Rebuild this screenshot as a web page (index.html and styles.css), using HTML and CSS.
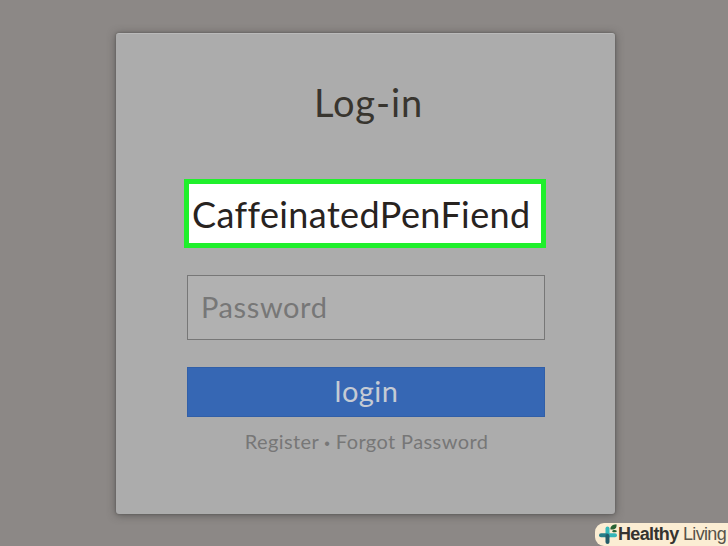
FILE: index.html
```html
<!DOCTYPE html>
<html lang="en">
<head>
<meta charset="utf-8">
<title>Log-in</title>
<link rel="stylesheet" href="styles.css">
</head>
<body>
<main class="card">
  <h1 class="title"><span>Log-in</span></h1>
  <div class="username"><span>CaffeinatedPenFiend</span></div>
  <div class="password"><span>Password</span></div>
  <button class="submit" type="button"><span>login</span></button>
  <p class="links"><span>Register <i class="dot">•</i> Forgot Password</span></p>
</main>
<aside class="badge">
  <svg class="mark" width="21" height="22" viewBox="0 0 21 22">
    <path d="M8.5 4.5v8" stroke="#35b9b9" stroke-width="4" stroke-linecap="round"/>
    <path d="M9 11.2h7" stroke="#35b5b8" stroke-width="4" stroke-linecap="round"/>
    <path d="M2 11.2h6" stroke="#267f89" stroke-width="4" stroke-linecap="round"/>
    <path d="M8.5 12v6" stroke="#235c69" stroke-width="4" stroke-linecap="round"/>
    <path d="M11.500 5.500C11 2.500 13 .5 17.500.2 18 4 16 6 11.500 5.500Z" fill="#286334"/>
    <path d="M13 7.200c1-1.500 3.500-1.500 5-.3-1 1.800-3.500 2-5 .3Z" fill="#286334"/>
  </svg>
  <span class="brand"><b>Healthy</b> Living</span>
</aside>
</body>
</html>
```
FILE: styles.css
```css
* { box-sizing: border-box; }
body {
  margin: 0;
  height: 546px;
  padding: 33px 0 0 116px;
  overflow: hidden;
  background: #8c8886;
  font-family: Lato, sans-serif;
}
.card {
  width: 499px;
  height: 481px;
  display: flex;
  flex-direction: column;
  align-items: center;
  border-radius: 3px;
  background: #acacac;
  border-top: 1px solid #bababa;
  box-shadow: 0 0 2px #555, 0 1px 9px rgba(50, 47, 45, .55);
}
.title {
  margin: 43px 0 0 6px;
  height: 50px;
  font-size: 38px;
  line-height: 50px;
  font-weight: 400;
  letter-spacing: .9px;
  color: #38352f;
}
.username {
  width: 362px;
  height: 69px;
  margin: 52px 1px 0 0;
  padding: 0 0 0 3px;
  border: 5px solid #20f02c;
  background: #fff;
  color: #28231f;
  font-size: 36px;
  line-height: 60px;
  letter-spacing: .4px;
  white-space: nowrap;
}
.password {
  width: 358px;
  height: 65px;
  margin: 27px 0 0 1px;
  padding-left: 13px;
  border: 1px solid #777;
  background: #b1b1b1;
  color: #777;
  font-size: 29px;
  line-height: 62px;
  letter-spacing: .6px;
}
.submit {
  width: 358px;
  height: 50px;
  margin: 27px 0 0 1px;
  padding: 0 0 2px 1px;
  border: 1px solid #315fa8;
  background: #3667b4;
  color: #c5cbd4;
  font: 29px/46px Lato, sans-serif;
  letter-spacing: .5px;
}
.links {
  margin: 10px 0 0 2px;
  color: #777;
  font-size: 20px;
  line-height: 28px;
  letter-spacing: .4px;
  white-space: nowrap;
}
.dot {
  font: 16px/1 "Liberation Sans", sans-serif;
}
.badge {
  position: absolute;
  right: 0;
  bottom: 0;
  width: 133px;
  height: 23px;
  display: flex;
  align-items: center;
  padding-left: 4px;
  border-radius: 9px 0 0 9px;
  background: #fbedd3;
}
.mark { flex: none; fill: none; }
.brand {
  margin: -2px 0 0 -2px;
  font: 18px/22px "Liberation Sans", sans-serif;
  letter-spacing: -.64px;
  color: #57534a;
  white-space: nowrap;
}
.brand b { color: #34332f; }
```
